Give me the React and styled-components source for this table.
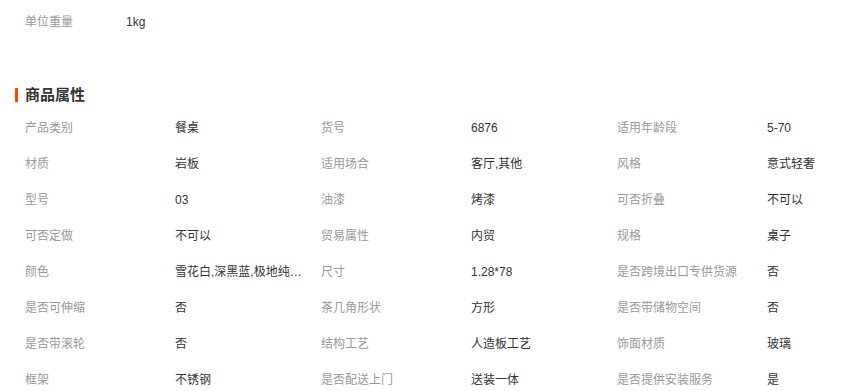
import React from 'react';
import styled, { createGlobalStyle } from 'styled-components';

const GlobalStyle = createGlobalStyle`
  body {
    margin: 0;
    background: #fff;
    font-family: "Liberation Sans", "Noto Sans CJK SC", sans-serif;
    font-size: 12px;
    color: #333;
    overflow: hidden;
  }
`;

const StyledWrapper = styled.div`
  width: 857px;
  padding-top: 4px;
`;

const StyledRow = styled.div`
  display: grid;
  grid-template-columns: 296px 296px 1fr;
  padding-left: 25px;
`;

const StyledPair = styled.div`
  display: flex;
  height: 36px;
  align-items: center;
  line-height: 16px;
  min-width: 0;
`;

const StyledLabel = styled.span`
  width: ${({ narrow }) => (narrow ? '101px' : '150px')};
  flex-shrink: 0;
  color: #999;
`;

const StyledValue = styled.span`
  max-width: 128px;
  color: #333;
  white-space: nowrap;
  overflow: hidden;
  text-overflow: ellipsis;
`;

const StyledHeading = styled.h3`
  position: relative;
  margin: 45px 0 5px;
  padding-left: 25px;
  height: 20px;
  line-height: 20px;
  font-size: 15px;
  font-weight: bold;
  color: #333;

  &::before {
    content: '';
    position: absolute;
    left: 15px;
    top: 3px;
    width: 3px;
    height: 14px;
    background: #ff4400;
  }
`;

const attributes = [
  ['产品类别', '餐桌'],
  ['货号', '6876'],
  ['适用年龄段', '5-70'],
  ['材质', '岩板'],
  ['适用场合', '客厅,其他'],
  ['风格', '意式轻奢'],
  ['型号', '03'],
  ['油漆', '烤漆'],
  ['可否折叠', '不可以'],
  ['可否定做', '不可以'],
  ['贸易属性', '内贸'],
  ['规格', '桌子'],
  ['颜色', '雪花白,深黑蓝,极地纯白,象牙白'],
  ['尺寸', '1.28*78'],
  ['是否跨境出口专供货源', '否'],
  ['是否可伸缩', '否'],
  ['茶几角形状', '方形'],
  ['是否带储物空间', '否'],
  ['是否带滚轮', '否'],
  ['结构工艺', '人造板工艺'],
  ['饰面材质', '玻璃'],
  ['框架', '不锈钢'],
  ['是否配送上门', '送装一体'],
  ['是否提供安装服务', '是'],
];

const Pair = ({ label, value, narrow }) => (
  <StyledPair>
    <StyledLabel narrow={narrow}>{label}</StyledLabel>
    <StyledValue title={value}>{value}</StyledValue>
  </StyledPair>
);

const App = () => (
  <StyledWrapper>
    <GlobalStyle />
    <StyledRow>
      <Pair label="单位重量" value="1kg" narrow />
    </StyledRow>
    <StyledHeading>商品属性</StyledHeading>
    <StyledRow>
      {attributes.map(([label, value]) => (
        <Pair key={label} label={label} value={value} />
      ))}
    </StyledRow>
  </StyledWrapper>
);

export default App;
